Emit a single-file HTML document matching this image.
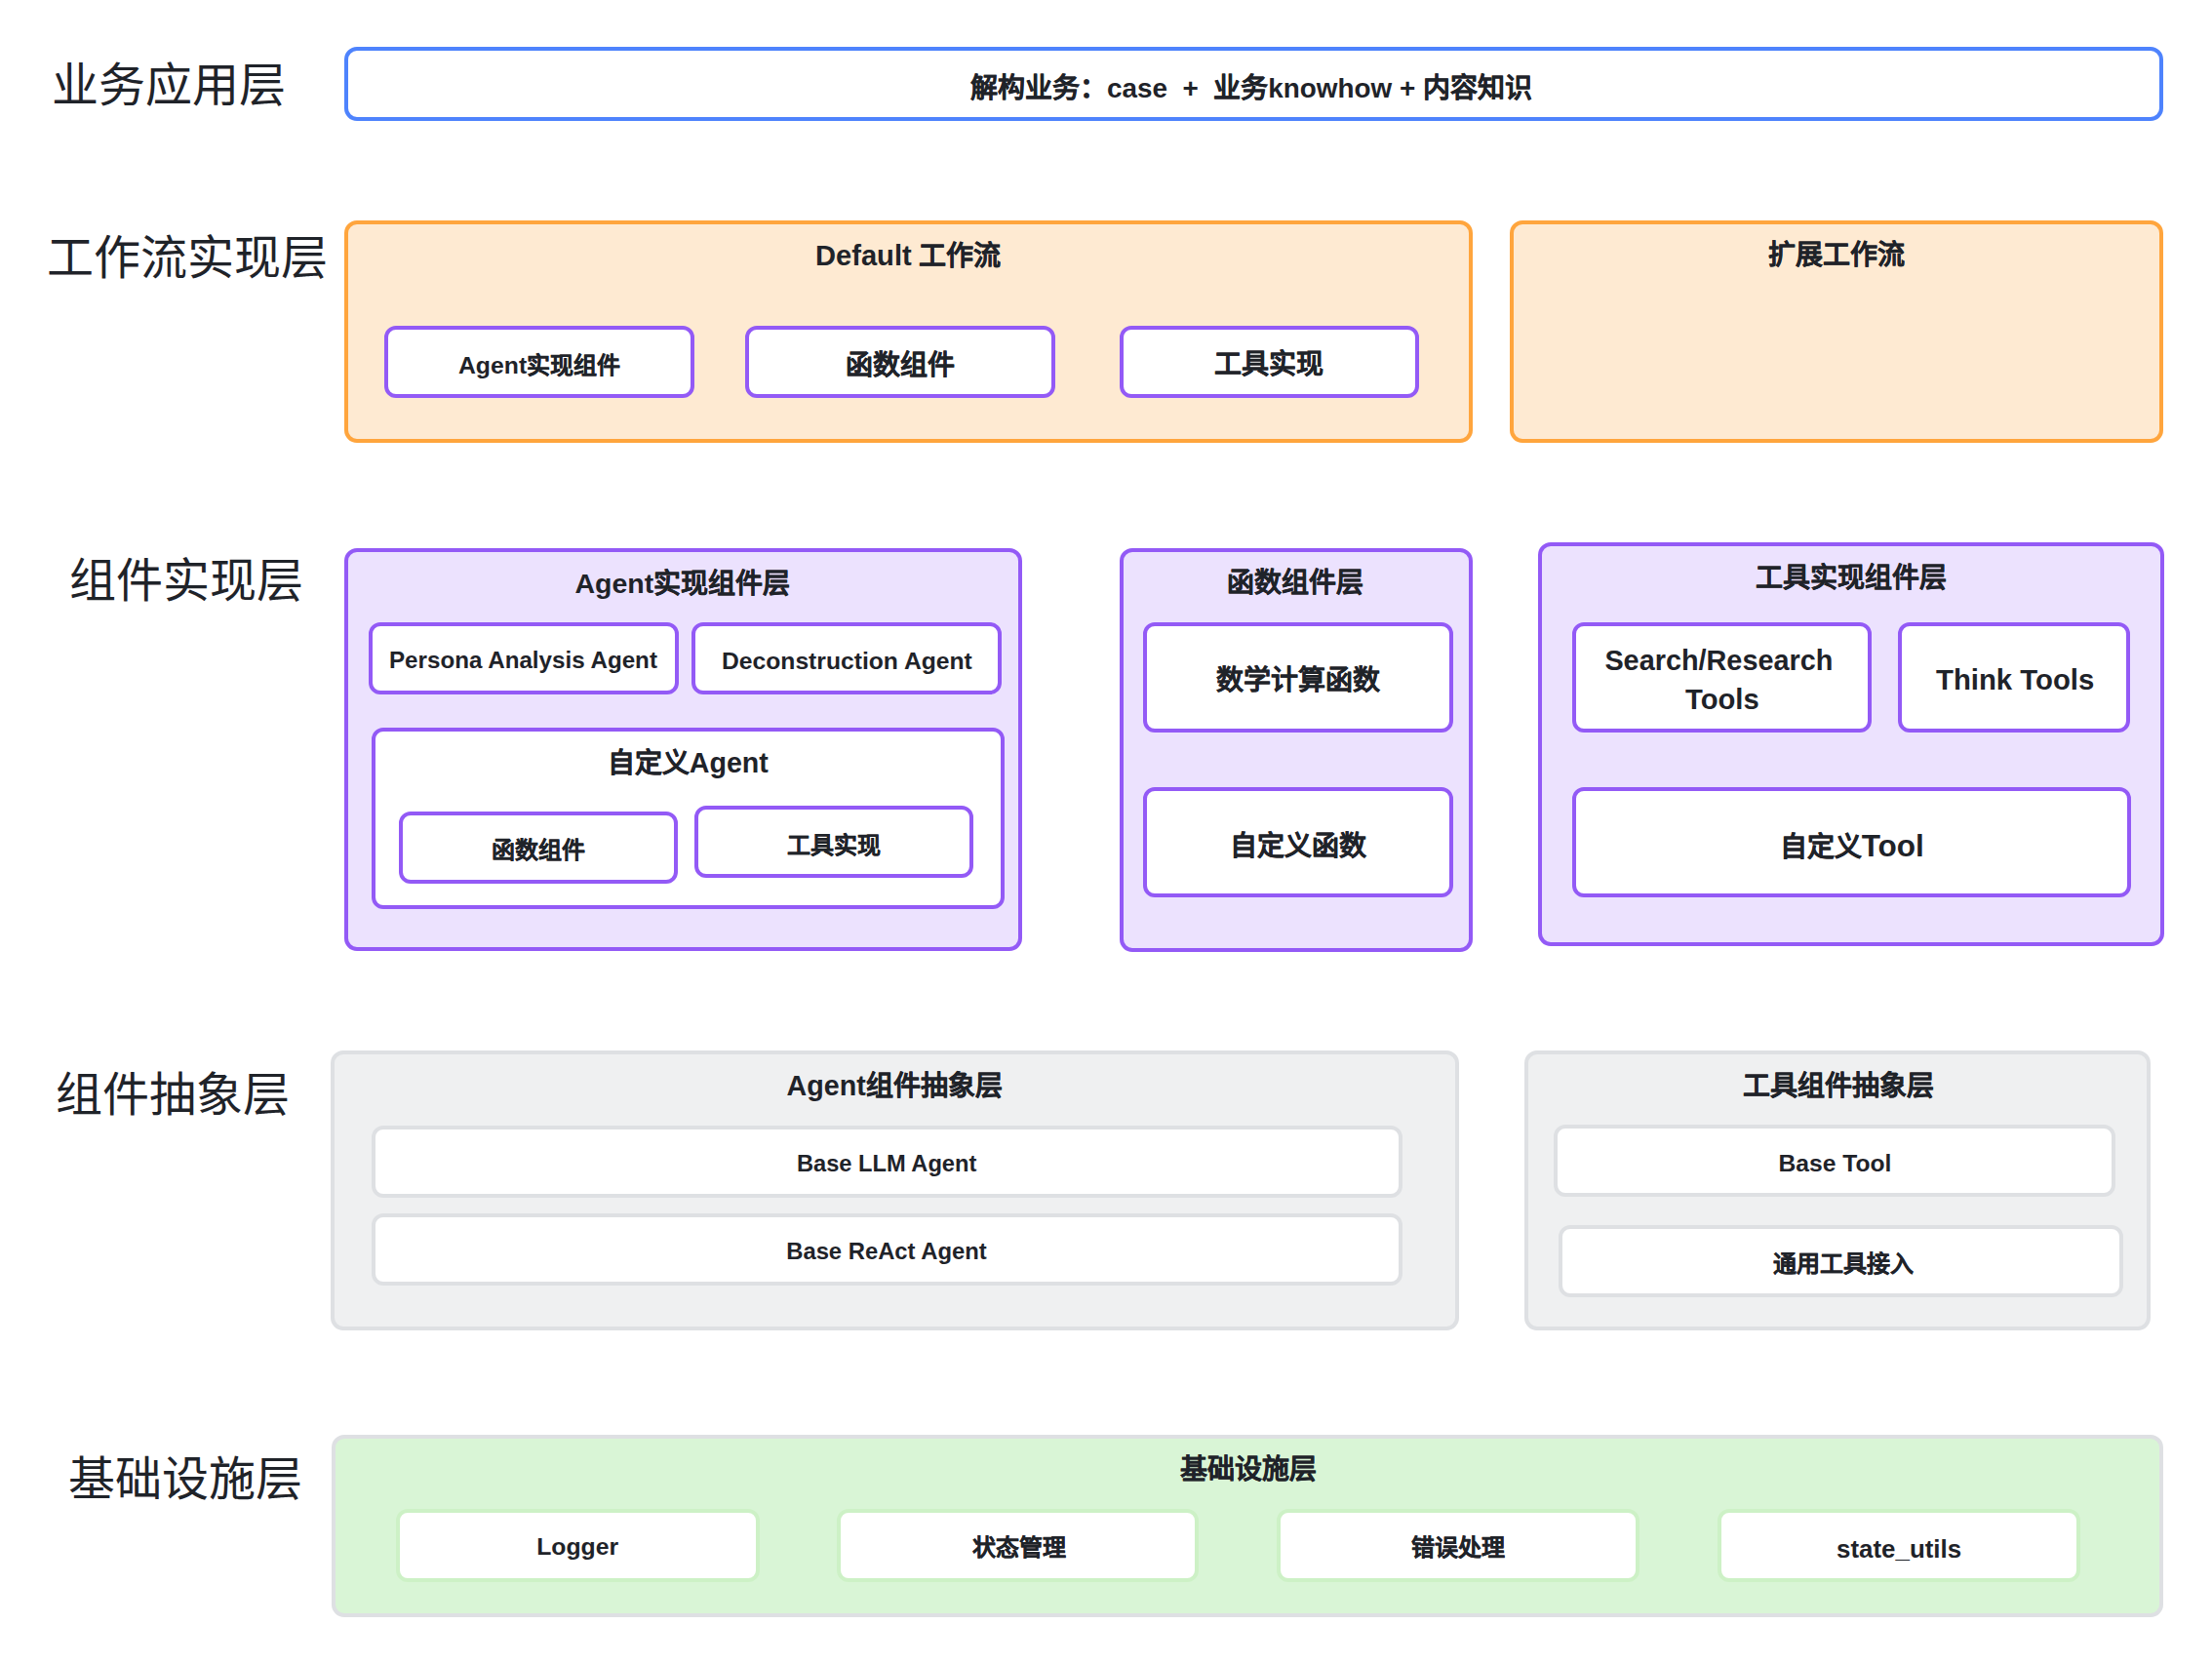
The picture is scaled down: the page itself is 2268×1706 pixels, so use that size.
<!DOCTYPE html>
<html lang="zh-CN"><head><meta charset="utf-8"><title>Architecture</title>
<style>
html,body{margin:0;padding:0;background:#ffffff;}
body{width:2268px;height:1706px;position:relative;overflow:hidden;font-family:"Liberation Sans",sans-serif;color:#1f2329;}
.b{position:absolute;box-sizing:border-box;border-style:solid;}
.t{position:absolute;white-space:nowrap;line-height:1;}
.k{-webkit-text-stroke:0.2px #1f2329;}
</style></head><body>
<div class="b" style="left:353px;top:48px;width:1865px;height:76px;border-width:4px;border-color:#4e83fd;background:#ffffff;border-radius:13px"></div>
<div class="b" style="left:353px;top:226px;width:1157px;height:228px;border-width:4px;border-color:#ffa53d;background:#feead2;border-radius:13px"></div>
<div class="b" style="left:1548px;top:226px;width:670px;height:228px;border-width:4px;border-color:#ffa53d;background:#feead2;border-radius:13px"></div>
<div class="b" style="left:394px;top:334px;width:318px;height:74px;border-width:4px;border-color:#935af6;background:#ffffff;border-radius:12px"></div>
<div class="b" style="left:764px;top:334px;width:318px;height:74px;border-width:4px;border-color:#935af6;background:#ffffff;border-radius:12px"></div>
<div class="b" style="left:1148px;top:334px;width:307px;height:74px;border-width:4px;border-color:#935af6;background:#ffffff;border-radius:12px"></div>
<div class="b" style="left:353px;top:562px;width:695px;height:413px;border-width:4px;border-color:#935af6;background:#ece2fe;border-radius:13px"></div>
<div class="b" style="left:378px;top:638px;width:318px;height:74px;border-width:4px;border-color:#935af6;background:#ffffff;border-radius:12px"></div>
<div class="b" style="left:709px;top:638px;width:318px;height:74px;border-width:4px;border-color:#935af6;background:#ffffff;border-radius:12px"></div>
<div class="b" style="left:381px;top:746px;width:649px;height:186px;border-width:4px;border-color:#935af6;background:#ffffff;border-radius:12px"></div>
<div class="b" style="left:409px;top:832px;width:286px;height:74px;border-width:4px;border-color:#935af6;background:#ffffff;border-radius:12px"></div>
<div class="b" style="left:712px;top:826px;width:286px;height:74px;border-width:4px;border-color:#935af6;background:#ffffff;border-radius:12px"></div>
<div class="b" style="left:1148px;top:562px;width:362px;height:414px;border-width:4px;border-color:#935af6;background:#ece2fe;border-radius:13px"></div>
<div class="b" style="left:1172px;top:638px;width:318px;height:113px;border-width:4px;border-color:#935af6;background:#ffffff;border-radius:12px"></div>
<div class="b" style="left:1172px;top:807px;width:318px;height:113px;border-width:4px;border-color:#935af6;background:#ffffff;border-radius:12px"></div>
<div class="b" style="left:1577px;top:556px;width:642px;height:414px;border-width:4px;border-color:#935af6;background:#ece2fe;border-radius:13px"></div>
<div class="b" style="left:1612px;top:638px;width:307px;height:113px;border-width:4px;border-color:#935af6;background:#ffffff;border-radius:12px"></div>
<div class="b" style="left:1946px;top:638px;width:238px;height:113px;border-width:4px;border-color:#935af6;background:#ffffff;border-radius:12px"></div>
<div class="b" style="left:1612px;top:807px;width:573px;height:113px;border-width:4px;border-color:#935af6;background:#ffffff;border-radius:12px"></div>
<div class="b" style="left:339px;top:1077px;width:1157px;height:287px;border-width:4px;border-color:#dee0e3;background:#eff0f1;border-radius:13px"></div>
<div class="b" style="left:381px;top:1154px;width:1057px;height:74px;border-width:4px;border-color:#dee0e3;background:#ffffff;border-radius:12px"></div>
<div class="b" style="left:381px;top:1244px;width:1057px;height:74px;border-width:4px;border-color:#dee0e3;background:#ffffff;border-radius:12px"></div>
<div class="b" style="left:1563px;top:1077px;width:642px;height:287px;border-width:4px;border-color:#dee0e3;background:#eff0f1;border-radius:13px"></div>
<div class="b" style="left:1593px;top:1153px;width:576px;height:74px;border-width:4px;border-color:#dee0e3;background:#ffffff;border-radius:12px"></div>
<div class="b" style="left:1598px;top:1256px;width:579px;height:74px;border-width:4px;border-color:#dee0e3;background:#ffffff;border-radius:12px"></div>
<div class="b" style="left:340px;top:1471px;width:1878px;height:187px;border-width:4px;border-color:#dee0e3;background:#d9f5d6;border-radius:13px"></div>
<div class="b" style="left:406px;top:1547px;width:373px;height:75px;border-width:4px;border-color:#cdf1c6;background:#ffffff;border-radius:12px"></div>
<div class="b" style="left:858px;top:1547px;width:371px;height:75px;border-width:4px;border-color:#cdf1c6;background:#ffffff;border-radius:12px"></div>
<div class="b" style="left:1309px;top:1547px;width:372px;height:75px;border-width:4px;border-color:#cdf1c6;background:#ffffff;border-radius:12px"></div>
<div class="b" style="left:1761px;top:1547px;width:372px;height:75px;border-width:4px;border-color:#cdf1c6;background:#ffffff;border-radius:12px"></div>
<div class="t" style="left:53.20px;top:63.94px;font-size:48.00px;font-weight:400">业务应用层</div>
<div class="t" style="left:47.80px;top:241.34px;font-size:48.00px;font-weight:400">工作流实现层</div>
<div class="t" style="left:70.70px;top:571.84px;font-size:48.00px;font-weight:400">组件实现层</div>
<div class="t" style="left:56.90px;top:1099.44px;font-size:48.00px;font-weight:400">组件抽象层</div>
<div class="t" style="left:69.60px;top:1492.74px;font-size:48.00px;font-weight:400">基础设施层</div>
<div class="t" style="left:995.00px;top:76.84px;font-size:28.00px;font-weight:700"><span class="k">解构业务：</span><span style="font-size:27.87px">case  +</span>  <span class="k">业务</span><span style="font-size:27.87px">knowhow +</span> <span class="k">内容知识</span></div>
<div class="t" style="left:836.00px;top:247.84px;font-size:28.00px;font-weight:700"><span style="font-size:29.11px">Default</span> <span class="k">工作流</span></div>
<div class="t" style="left:1813.20px;top:247.84px;font-size:28.00px;font-weight:700"><span class="k">扩展工作流</span></div>
<div class="t" style="left:470.00px;top:362.62px;font-size:24.00px;font-weight:700"><span style="font-size:24.76px">Agent</span><span class="k">实现组件</span></div>
<div class="t" style="left:866.80px;top:360.64px;font-size:28.00px;font-weight:700"><span class="k">函数组件</span></div>
<div class="t" style="left:1245.20px;top:360.04px;font-size:28.00px;font-weight:700"><span class="k">工具实现</span></div>
<div class="t" style="left:589.50px;top:583.84px;font-size:28.00px;font-weight:700"><span style="font-size:28.51px">Agent</span><span class="k">实现组件层</span></div>
<div class="t" style="left:399.00px;top:665.22px;font-size:24.18px;font-weight:700">Persona Analysis Agent</div>
<div class="t" style="left:740.00px;top:666.12px;font-size:24.68px;font-weight:700">Deconstruction Agent</div>
<div class="t" style="left:622.80px;top:768.40px;font-size:28.00px;font-weight:700"><span class="k">自定义</span><span style="font-size:28.61px">Agent</span></div>
<div class="t" style="left:503.50px;top:859.72px;font-size:24.00px;font-weight:700"><span class="k">函数组件</span></div>
<div class="t" style="left:807.00px;top:854.52px;font-size:24.00px;font-weight:700"><span class="k">工具实现</span></div>
<div class="t" style="left:1258.00px;top:583.94px;font-size:28.00px;font-weight:700"><span class="k">函数组件层</span></div>
<div class="t" style="left:1246.50px;top:683.84px;font-size:28.00px;font-weight:700"><span class="k">数学计算函数</span></div>
<div class="t" style="left:1261.10px;top:853.64px;font-size:28.00px;font-weight:700"><span class="k">自定义函数</span></div>
<div class="t" style="left:1800.20px;top:578.74px;font-size:28.00px;font-weight:700"><span class="k">工具实现组件层</span></div>
<div class="t" style="left:1645.40px;top:663.24px;font-size:28.84px;font-weight:700">Search/Research</div>
<div class="t" style="left:1728.00px;top:703.34px;font-size:29.20px;font-weight:700">Tools</div>
<div class="t" style="left:1985.00px;top:681.94px;font-size:29.31px;font-weight:700">Think Tools</div>
<div class="t" style="left:1824.70px;top:851.84px;font-size:28.00px;font-weight:700"><span class="k">自定义</span><span style="font-size:31.50px">Tool</span></div>
<div class="t" style="left:806.50px;top:1099.34px;font-size:28.00px;font-weight:700"><span style="font-size:28.66px">Agent</span><span class="k">组件抽象层</span></div>
<div class="t" style="left:816.90px;top:1182.12px;font-size:23.67px;font-weight:700">Base LLM Agent</div>
<div class="t" style="left:806.20px;top:1270.62px;font-size:23.82px;font-weight:700">Base ReAct Agent</div>
<div class="t" style="left:1786.60px;top:1099.64px;font-size:28.00px;font-weight:700"><span class="k">工具组件抽象层</span></div>
<div class="t" style="left:1823.50px;top:1181.32px;font-size:24.64px;font-weight:700">Base Tool</div>
<div class="t" style="left:1817.70px;top:1283.72px;font-size:24.00px;font-weight:700"><span class="k">通用工具接入</span></div>
<div class="t" style="left:1209.70px;top:1493.44px;font-size:28.00px;font-weight:700"><span class="k">基础设施层</span></div>
<div class="t" style="left:550.20px;top:1573.52px;font-size:24.75px;font-weight:700">Logger</div>
<div class="t" style="left:997.10px;top:1574.72px;font-size:24.00px;font-weight:700"><span class="k">状态管理</span></div>
<div class="t" style="left:1446.70px;top:1574.72px;font-size:24.00px;font-weight:700"><span class="k">错误处理</span></div>
<div class="t" style="left:1883.10px;top:1575.52px;font-size:25.89px;font-weight:700">state_utils</div>
</body></html>
